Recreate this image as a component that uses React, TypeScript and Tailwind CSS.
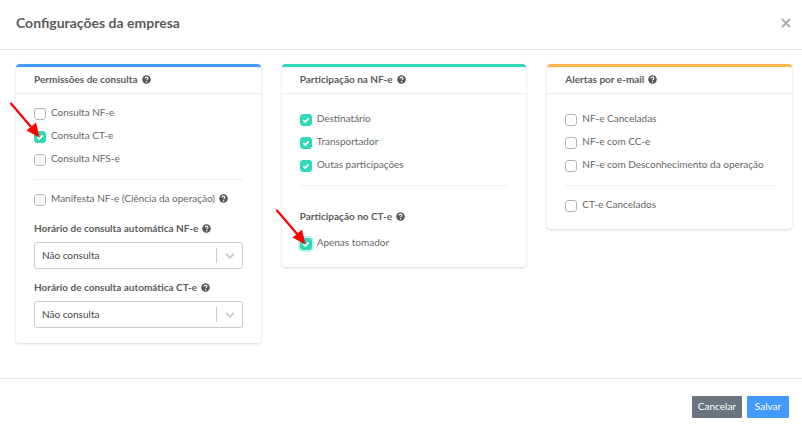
import { ReactNode, useId, useState } from "react";
import clsx from "clsx";

interface CheckItemProps {
  label: string;
  checked?: boolean;
  help?: boolean;
  focused?: boolean;
  pointer?: boolean;
}

interface PanelProps {
  title: string;
  color: string;
  children: ReactNode;
}

const HelpIcon = () => (
  <svg viewBox="0 0 16 16" className="h-[9px] w-[9px] shrink-0" aria-hidden="true">
    <circle cx="8" cy="8" r="7.6" fill="#555" />
    <path d="M5.4 6.3C5.5 4.6 6.6 3.8 8 3.8s2.6.8 2.6 2.2c0 1.7-2.3 1.7-2.3 3.4" fill="none" stroke="#fff" strokeWidth="1.9" />
    <circle cx="8.2" cy="11.9" r="1.3" fill="#fff" />
  </svg>
);

const Pointer = () => (
  <svg viewBox="0 0 32 36" className="pointer-events-none absolute -top-[29px] -left-[25px] h-9 w-8" aria-hidden="true">
    <path d="M2 1.5 23 26" stroke="#f00" strokeWidth="2.2" strokeLinecap="round" />
    <path d="M30.5 35.5 17.5 28.5 27 20.5Z" fill="#f00" />
  </svg>
);

const CheckItem = ({ label, checked = false, help, focused, pointer }: CheckItemProps) => {
  const id = useId();
  const [isChecked, setIsChecked] = useState(checked);

  return (
    <div className="flex h-[23px] items-center">
      <span className="relative grid h-3 w-3 shrink-0 place-items-center">
        <input
          type="checkbox"
          id={id}
          checked={isChecked}
          onChange={() => setIsChecked(prev => !prev)}
          className={clsx(
            "col-start-1 row-start-1 h-3 w-3 appearance-none rounded-[3px] border border-[#adb5bd] bg-white checked:border-[#2fd8b6] checked:bg-[#2fd8b6]",
            focused && "ring-2 ring-[#2fd8b6]/30",
          )}
        />
        {isChecked && (
          <svg viewBox="0 0 8 8" className="pointer-events-none col-start-1 row-start-1 h-2 w-2" aria-hidden="true">
            <path d="M1.4 4.2 3.2 6 6.6 2.3" fill="none" stroke="#fff" strokeWidth="1.7" />
          </svg>
        )}
        {pointer && <Pointer />}
      </span>
      <label htmlFor={id} className="pb-1 pl-[5px] whitespace-nowrap">
        {label}
      </label>
      {help && (
        <span className="pb-0.5 pl-1">
          <HelpIcon />
        </span>
      )}
    </div>
  );
};

const Panel = ({ title, color, children }: PanelProps) => (
  <section className={clsx("rounded border-t-[3px] bg-white shadow-[0_1px_3px_rgba(0,0,0,0.16)]", color)}>
    <div className="flex h-[27px] items-center gap-1 border-b border-[#ececec] px-[18px] pb-0.5">
      <h2 className="font-bold text-[#5c5c5c]">{title}</h2>
      <HelpIcon />
    </div>
    {children}
  </section>
);

const Divider = () => <hr className="my-2 border-[#f0f0f0]" />;

const ScheduleSelect = ({ label }: { label: string }) => {
  const id = useId();

  return (
    <div>
      <div className="flex h-4 items-center gap-1">
        <label htmlFor={id} className="font-bold whitespace-nowrap text-[#5c5c5c]">
          {label}
        </label>
        <HelpIcon />
      </div>
      <div className="relative mt-1.5">
        <select
          id={id}
          className="block h-[27px] w-full appearance-none rounded-[3px] border border-[#ccc] bg-white px-[7px] pb-0.5 text-[#444]"
        >
          <option>Não consulta</option>
        </select>
        <span className="pointer-events-none absolute inset-y-1.5 right-0 flex w-[27px] items-center justify-center border-l border-[#ccc]">
          <svg viewBox="0 0 10 6" className="h-1.5 w-2.5" aria-hidden="true">
            <path d="M1.2 1 5 4.8 8.8 1" fill="none" stroke="#ccc" strokeWidth="1.9" />
          </svg>
        </span>
      </div>
    </div>
  );
};

const App = () => {
  return (
    <div className="bg-white font-['Lato','Open_Sans',sans-serif] text-[10px] leading-4 text-[#666]">
      <header className="flex h-[50px] items-center justify-between border-b border-[#e5e5e5] pr-[9px] pb-1 pl-4">
        <h1 className="text-[14px] font-bold text-[#5c5c5c]">Configurações da empresa</h1>
        <button type="button" aria-label="Fechar" className="p-0.5">
          <svg viewBox="0 0 10 10" className="h-2.5 w-2.5" aria-hidden="true">
            <path d="m1 1 8 8M9 1 1 9" stroke="#aaa" strokeWidth="1.8" />
          </svg>
        </button>
      </header>

      <main className="grid grid-cols-3 items-start gap-[21px] pt-3.5 pr-2.5 pb-[35px] pl-4">
        <Panel title="Permissões de consulta" color="border-[#4299ff]">
          <div className="px-[18px] pt-2 pb-[15px]">
            <CheckItem label="Consulta NF-e" />
            <CheckItem label="Consulta CT-e" checked pointer />
            <CheckItem label="Consulta NFS-e" />
            <Divider />
            <CheckItem label="Manifesta NF-e (Ciência da operação)" help />
            <div className="space-y-2.5 pt-[9px]">
              <ScheduleSelect label="Horário de consulta automática NF-e" />
              <ScheduleSelect label="Horário de consulta automática CT-e" />
            </div>
          </div>
        </Panel>

        <Panel title="Participação na NF-e" color="border-[#2fd8b6]">
          <div className="px-[18px] pt-3.5 pb-3">
            <CheckItem label="Destinatário" checked />
            <CheckItem label="Transportador" checked />
            <CheckItem label="Outas participações" checked />
            <Divider />
            <div className="flex items-center gap-1 pt-3.5 pb-2">
              <h2 className="font-bold text-[#5c5c5c]">Participação no CT-e</h2>
              <HelpIcon />
            </div>
            <CheckItem label="Apenas tomador" checked focused pointer />
          </div>
        </Panel>

        <Panel title="Alertas por e-mail" color="border-[#ffb44c]">
          <div className="px-[18px] pt-3.5 pb-3">
            <CheckItem label="NF-e Canceladas" />
            <CheckItem label="NF-e com CC-e" />
            <CheckItem label="NF-e com Desconhecimento da operação" />
            <Divider />
            <CheckItem label="CT-e Cancelados" />
          </div>
        </Panel>
      </main>

      <footer className="flex justify-end gap-[5px] border-t border-[#e5e5e5] py-[17px] pr-[13px] text-white">
        <button type="button" className="h-[22px] min-w-[42px] rounded-[1px] bg-[#6c757d] px-1.5 pb-0.5">
          Cancelar
        </button>
        <button type="button" className="h-[22px] min-w-[42px] rounded-[1px] bg-[#4299ff] px-1.5 pb-0.5">
          Salvar
        </button>
      </footer>
    </div>
  );
};

export default App;
